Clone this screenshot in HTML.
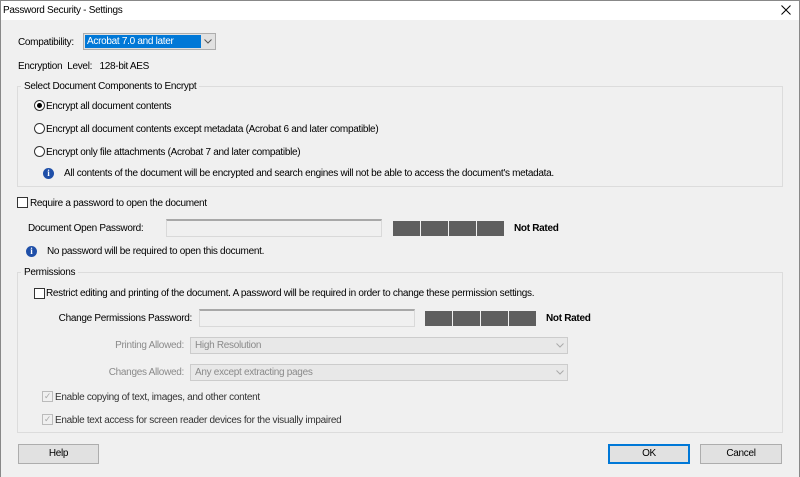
<!DOCTYPE html>
<html><head><style>
*{box-sizing:border-box}
body{margin:0;width:800px;height:477px;background:#f0f0f0;font-family:"Liberation Sans",sans-serif;font-size:10px;letter-spacing:-0.3px;color:#000;position:relative;overflow:hidden}
.a{position:absolute;white-space:nowrap;line-height:13px}
.r{position:absolute;white-space:nowrap;line-height:13px;text-align:right}
.title{position:absolute;left:0;top:0;width:800px;height:20px;background:#fff;border-top:1px solid #888;border-left:1px solid #888;border-right:1px solid #888}
.grp{position:absolute;border:1px solid #dcdcdc}
.leg{position:absolute;background:#f0f0f0;padding:0 3px;line-height:13px}
.radio{position:absolute;width:11px;height:11px;border:1px solid #333;border-radius:50%;background:#fff}
.cb{position:absolute;width:11px;height:11px;border:1px solid #333;background:#fff}
.info{position:absolute;width:11px;height:11px;border-radius:50%;background:#1f4fa8;color:#fff;font-size:9px;font-weight:bold;text-align:center;line-height:11px;font-family:"Liberation Serif",serif;letter-spacing:0}
.inp{position:absolute;background:#f0f0f0;border:1px solid #d9d9d9;border-top:2px solid #a8a8a8}
.bar{position:absolute;height:15px;width:27px;background:#5e5e5e}
.btn{position:absolute;height:20px;border:1px solid #adadad;background:#e1e1e1;text-align:center;line-height:18px}
.sel{position:absolute;border:1px solid #ccc;background:#e8e8e8;color:#8a8a8a;padding-left:4px;line-height:15px;height:17px}
.dis{color:#8a8a8a}
</style></head><body>
<div class="title"></div>
<div class="a" style="left:3px;top:4px">Password Security - Settings</div>
<svg style="position:absolute;left:781px;top:5px" width="10" height="10"><path d="M0.5 0.5L9.5 9.5M9.5 0.5L0.5 9.5" stroke="#000" stroke-width="1"/></svg>
<div style="position:absolute;left:0;top:20px;width:1px;height:457px;background:#888"></div>
<div style="position:absolute;left:799px;top:20px;width:1px;height:457px;background:#888"></div>

<div class="a" style="left:18px;top:36px">Compatibility:</div>
<div style="position:absolute;left:83px;top:33px;width:133px;height:17px;border:1px solid #adadad;background:#e1e1e1"></div>
<div class="a" style="left:85px;top:35px;width:116px;height:13px;background:#0078d7;color:#fff;padding-left:2px">Acrobat 7.0 and later</div>
<svg style="position:absolute;left:204px;top:39px" width="8" height="5"><path d="M0.5 0.5L4 4L7.5 0.5" stroke="#555" fill="none"/></svg>
<div class="a" style="left:18px;top:60px">Encryption&nbsp; Level:&nbsp;&nbsp; 128-bit AES</div>

<div class="grp" style="left:17px;top:86px;width:766px;height:101px"></div>
<div class="leg" style="left:21px;top:80px">Select Document Components to Encrypt</div>
<div class="radio" style="left:34px;top:100px"><div style="position:absolute;left:2px;top:2px;width:5px;height:5px;border-radius:50%;background:#000"></div></div>
<div class="a" style="left:46px;top:100px">Encrypt all document contents</div>
<div class="radio" style="left:34px;top:123px"></div>
<div class="a" style="left:46px;top:123px">Encrypt all document contents except metadata (Acrobat 6 and later compatible)</div>
<div class="radio" style="left:34px;top:146px"></div>
<div class="a" style="left:46px;top:146px">Encrypt only file attachments (Acrobat 7 and later compatible)</div>
<div class="info" style="left:43px;top:168px">i</div>
<div class="a" style="left:64px;top:167px">All contents of the document will be encrypted and search engines will not be able to access the document's metadata.</div>

<div class="cb" style="left:17px;top:197px"></div>
<div class="a" style="left:30px;top:197px">Require a password to open the document</div>
<div class="a" style="left:28px;top:222px">Document Open Password:</div>
<div class="inp" style="left:166px;top:219px;width:216px;height:18px"></div>
<div class="bar" style="left:393px;top:221px"></div><div class="bar" style="left:421px;top:221px"></div><div class="bar" style="left:449px;top:221px"></div><div class="bar" style="left:477px;top:221px"></div>
<div class="a" style="left:514px;top:222px;font-weight:bold">Not Rated</div>
<div class="info" style="left:26px;top:246px">i</div>
<div class="a" style="left:47px;top:245px">No password will be required to open this document.</div>

<div class="grp" style="left:17px;top:272px;width:766px;height:161px"></div>
<div class="leg" style="left:21px;top:266px">Permissions</div>
<div class="cb" style="left:34px;top:288px"></div>
<div class="a" style="left:46px;top:287px">Restrict editing and printing of the document. A password will be required in order to change these permission settings.</div>
<div class="r" style="left:0;width:192px;top:312px">Change Permissions Password:</div>
<div class="inp" style="left:199px;top:309px;width:216px;height:18px"></div>
<div class="bar" style="left:425px;top:311px"></div><div class="bar" style="left:453px;top:311px"></div><div class="bar" style="left:481px;top:311px"></div><div class="bar" style="left:509px;top:311px"></div>
<div class="a" style="left:546px;top:312px;font-weight:bold">Not Rated</div>
<div class="r dis" style="left:0;width:184px;top:339px">Printing Allowed:</div>
<div class="sel" style="left:190px;top:337px;width:378px">High Resolution</div>
<svg style="position:absolute;left:556px;top:343px" width="8" height="5"><path d="M0.5 0.5L4 4L7.5 0.5" stroke="#aaa" fill="none"/></svg>
<div class="r dis" style="left:0;width:184px;top:366px">Changes Allowed:</div>
<div class="sel" style="left:190px;top:364px;width:378px">Any except extracting pages</div>
<svg style="position:absolute;left:556px;top:370px" width="8" height="5"><path d="M0.5 0.5L4 4L7.5 0.5" stroke="#aaa" fill="none"/></svg>
<div class="cb" style="left:42px;top:391px;border-color:#bbb;background:#f0f0f0;color:#aaa;font-size:9px;line-height:9px;text-align:center">✓</div>
<div class="a" style="left:55px;top:391px;color:#333">Enable copying of text, images, and other content</div>
<div class="cb" style="left:42px;top:414px;border-color:#bbb;background:#f0f0f0;color:#aaa;font-size:9px;line-height:9px;text-align:center">✓</div>
<div class="a" style="left:55px;top:414px;color:#333">Enable text access for screen reader devices for the visually impaired</div>

<div class="btn" style="left:18px;top:444px;width:81px">Help</div>
<div class="btn" style="left:608px;top:444px;width:82px;border:2px solid #0078d7;line-height:16px">OK</div>
<div class="btn" style="left:700px;top:444px;width:82px">Cancel</div>
</body></html>
